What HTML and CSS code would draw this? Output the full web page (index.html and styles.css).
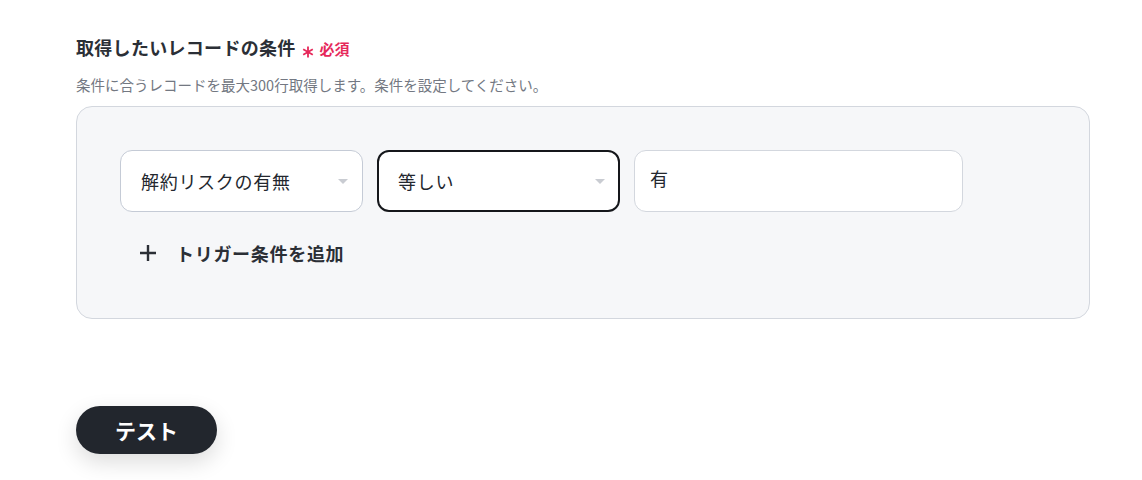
FILE: index.html
```html
<!DOCTYPE html>
<html lang="ja">
<head>
<meta charset="utf-8">
<link rel="stylesheet" href="styles.css">
</head>
<body>
<div class="page">
  <div class="field-label">
    <span class="label-text">取得したいレコードの条件</span>
    <span class="required"><svg class="asterisk" width="12" height="12" viewBox="0 0 12 12"><path d="M6 0.5v11M1.2 3.2l9.6 5.6M1.2 8.8l9.6-5.6" stroke="#e6285a" stroke-width="1.8" fill="none"/></svg>必須</span>
  </div>
  <p class="desc">条件に合うレコードを最大300行取得します。条件を設定してください。</p>
  <div class="panel">
    <div class="cond-row">
      <div class="select w1"><span>解約リスクの有無</span><span class="caret"></span></div>
      <div class="select w1 focused"><span>等しい</span><span class="caret"></span></div>
      <div class="input w2"><span>有</span></div>
    </div>
    <div class="add-row">
      <svg class="plus" width="20" height="20" viewBox="0 0 20 20"><path d="M10 2v16M2 10h16" stroke="#2b2f36" stroke-width="2.4" fill="none"/></svg>
      <span class="add-text">トリガー条件を追加</span>
    </div>
  </div>
  <button class="test-btn">テスト</button>
</div>
</body>
</html>
```
FILE: styles.css
```css
html, body {
  margin: 0;
  padding: 0;
  background: #ffffff;
  font-family: "Noto Sans CJK JP", "Noto Sans", sans-serif;
}
.page {
  padding: 34px 0 30px 76px;
  width: 1014px;
}
.field-label {
  display: flex;
  align-items: baseline;
  gap: 6px;
  height: 28px;
}
.label-text {
  font-size: 18px;
  letter-spacing: 0.3px;
  font-weight: 700;
  color: #2b2f36;
}
.required {
  color: #e6285a;
  font-size: 15px;
  font-weight: 700;
  display: flex;
  align-items: baseline;
}
.asterisk {
  margin-right: 6px;
  position: relative;
  top: 3px;
}
.desc {
  margin: 13px 0 0 0;
  font-size: 14.5px;
  line-height: 20px;
  color: #737882;
}
.panel {
  margin-top: 11px;
  height: 213px;
  box-sizing: border-box;
  border: 1px solid #d3d7de;
  border-radius: 16px;
  background: #f6f7f9;
  padding: 43px 43px 0 43px;
}
.cond-row {
  display: flex;
  gap: 14px;
}
.select, .input {
  height: 62px;
  box-sizing: border-box;
  background: #fff;
  border: 1px solid #c5cbd6;
  border-radius: 12px;
  display: flex;
  align-items: center;
  padding: 0 20px;
  font-size: 18px;
  letter-spacing: 0.7px;
  color: #23272e;
}
.w1 { width: 243px; justify-content: space-between; padding-right: 14px; }
.w2 { width: 329px; align-items: flex-start; padding-top: 14px; padding-left: 15px; border-color: #d3d7de; }
.focused {
  border: 2px solid #15171b;
  padding-left: 19px;
  padding-right: 13px;
}
.caret {
  width: 0;
  height: 0;
  border-left: 5px solid transparent;
  border-right: 5px solid transparent;
  border-top: 5px solid #c9ccd2;
}
.add-row {
  display: flex;
  align-items: center;
  margin-top: 28px;
  padding-left: 18px;
  height: 26px;
}
.plus { margin-right: 18px; }
.add-text {
  font-size: 18px;
  letter-spacing: 0.7px;
  font-weight: 700;
  color: #2b2f36;
}
.test-btn {
  margin-top: 87px;
  width: 141px;
  height: 48px;
  border: none;
  border-radius: 24px;
  background: #22262d;
  color: #fff;
  font-family: "Noto Sans CJK JP", "Noto Sans", sans-serif;
  font-size: 21px;
  font-weight: 700;
  box-shadow: 0 8px 22px rgba(0,0,0,0.14);
  cursor: pointer;
  padding: 0;
}
```
